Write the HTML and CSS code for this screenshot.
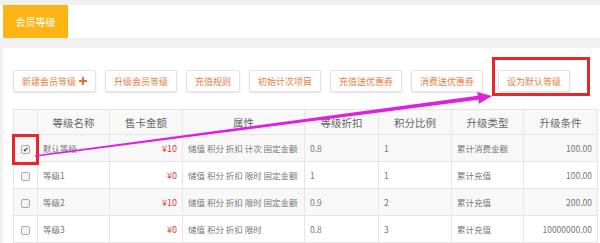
FILE: index.html
```html
<!DOCTYPE html>
<html lang="zh-CN">
<head>
    <meta charset="UTF-8">
    <title>会员等级</title>
    <link rel="stylesheet" href="styles.css">
</head>
<body>
    <div class="topbar">
        <div class="tab">会员等级</div>
    </div>

    <div class="panel">
        <div class="toolbar">
            <button class="btn">新建会员等级 <svg class="plus" width="8" height="8" viewBox="0 0 8 8"><path d="M3 0h2v3h3v2H5v3H3V5H0V3h3z"/></svg></button>
            <button class="btn">升级会员等级</button>
            <button class="btn">充值规则</button>
            <button class="btn">初始计次项目</button>
            <button class="btn">充值送优惠券</button>
            <button class="btn">消费送优惠券</button>
            <button class="btn btn-default">设为默认等级</button>
        </div>

        <table class="grid">
            <colgroup>
                <col style="width:24px">
                <col style="width:72px">
                <col style="width:73px">
                <col style="width:122px">
                <col style="width:74px">
                <col style="width:73px">
                <col style="width:72px">
                <col style="width:74px">
            </colgroup>
            <thead>
                <tr>
                    <th></th>
                    <th>等级名称</th>
                    <th>售卡金额</th>
                    <th>属性</th>
                    <th>等级折扣</th>
                    <th>积分比例</th>
                    <th>升级类型</th>
                    <th>升级条件</th>
                </tr>
            </thead>
            <tbody>
                <tr class="odd">
                    <td class="check"><span class="cb checked">✔</span></td>
                    <td>默认等级</td>
                    <td class="price">¥10</td>
                    <td>储值 积分 折扣 计次 固定金额</td>
                    <td>0.8</td>
                    <td>1</td>
                    <td>累计消费金额</td>
                    <td class="num">100.00</td>
                </tr>
                <tr>
                    <td class="check"><span class="cb"></span></td>
                    <td>等级1</td>
                    <td class="price">¥0</td>
                    <td>储值 积分 折扣 限时 固定金额</td>
                    <td>1</td>
                    <td>1</td>
                    <td>累计充值</td>
                    <td class="num">100.00</td>
                </tr>
                <tr class="odd">
                    <td class="check"><span class="cb"></span></td>
                    <td>等级2</td>
                    <td class="price">¥10</td>
                    <td>储值 积分 折扣 限时 固定金额</td>
                    <td>0.9</td>
                    <td>2</td>
                    <td>累计充值</td>
                    <td class="num">200.00</td>
                </tr>
                <tr>
                    <td class="check"><span class="cb"></span></td>
                    <td>等级3</td>
                    <td class="price">¥0</td>
                    <td>储值 积分 折扣 限时</td>
                    <td>0.8</td>
                    <td>3</td>
                    <td>累计充值</td>
                    <td class="num">10000000.00</td>
                </tr>
            </tbody>
        </table>
    </div>

    <!-- annotation layer: red boxes and the arrow drawn over the page -->
    <svg class="annot" width="600" height="243" viewBox="0 0 600 243">
        <rect x="13.5" y="135.5" width="24" height="28" />
        <rect x="493.5" y="58.5" width="95" height="36" />
        <polygon class="arrow" points="35.1,156.7 478.3,99.8 478.9,103.7 492,96 477.3,91.9 477.7,95.8 34.9,155.3" />
    </svg>
</body>
</html>
```

FILE: styles.css
```css
html, body {
    margin: 0;
    overflow: hidden;
}
body {
    position: relative;
    width: 600px;
    height: 243px;
    background-color: #f0f0f0;
    font-family: "Noto Sans CJK SC", "Liberation Sans", sans-serif;
}
.topbar {
    display: flex;
    height: 33px;
    margin-top: 5px;
    padding-left: 3px;
    background-color: #fff;
}
.tab {
    display: flex;
    align-items: center;
    justify-content: center;
    width: 65px;
    background-color: #fdb515;
    color: #fff;
    font-size: 10px;
}
.panel {
    height: 173px;
    overflow: hidden;
    margin: 10px 0 0 3px;
    padding: 22px 0 0 10px;
    background-color: #fff;
}
.toolbar {
    display: flex;
    gap: 9px;
    height: 22px;
}
.btn {
    display: flex;
    align-items: center;
    gap: 3px;
    height: 22px;
    padding: 0 8px;
    border: 1px solid #e3e3e3;
    border-radius: 2px;
    background-color: #fff;
    box-shadow: 0 1px 2px rgba(0,0,0,0.12);
    color: #e5803f;
    font-family: inherit;
    font-size: 9px;
}
.btn-default {
    margin-left: 6px;
}
.plus {
    fill: #e8702a;
}
.grid {
    width: 584px;
    margin-top: 17px;
    border-collapse: collapse;
    table-layout: fixed;
}
.grid th, .grid td {
    border: 1px solid #e6e6e6;
    padding: 0 5px;
    white-space: nowrap;
    overflow: hidden;
}
.grid th {
    height: 24px;
    background-color: #f8f8f8;
    color: #666;
    font-size: 10.5px;
    font-weight: normal;
}
.grid td {
    height: 26px;
    color: #777;
    font-size: 8.5px;
}
.grid tr.odd td {
    background-color: #f8f8f8;
}
.grid td.price {
    text-align: right;
    color: #e33b3b;
    font-size: 9px;
}
.grid td.num {
    text-align: right;
}
.grid td.check {
    padding: 0;
    text-align: center;
}
.cb {
    display: inline-block;
    width: 7px;
    height: 7px;
    border: 1px solid #aaa;
    border-radius: 2px;
    background-color: #f4f4f4;
    vertical-align: middle;
    font-size: 7px;
    line-height: 7px;
    color: #333;
    text-align: center;
}
.annot {
    position: absolute;
    left: 0;
    top: 0;
}
.annot rect {
    fill: none;
    stroke: #e8262d;
    stroke-width: 3;
}
.annot .arrow {
    fill: #e020e0;
}
```
